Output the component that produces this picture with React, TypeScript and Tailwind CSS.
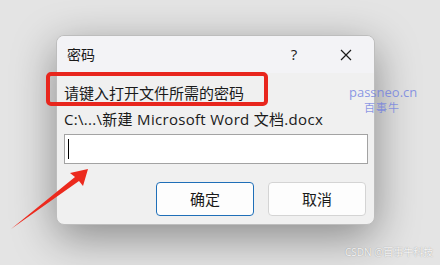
import React from 'react';

const font = { fontFamily: '"Open Sans", "Noto Sans CJK SC", sans-serif' };

export default function App() {
  return (
    <div
      className="relative w-[440px] h-[265px] overflow-hidden bg-[#e4e4e4] pt-[35px] pl-[56px]"
      style={font}
    >
      {/* dialog */}
      <div className="w-[319px] h-[190px] rounded-[8px] border border-[#bdbdbd] bg-[#f0f0f0] overflow-hidden flex flex-col shadow-[0_12px_44px_rgba(0,0,0,0.4)]">
        {/* title bar */}
        <div className="h-[37px] bg-[#f3f3f6] flex items-center pl-[10px] text-[14px] text-[#1a1a1a]">
          <span className="flex-1">密码</span>
          <span className="w-[16px] text-center mr-[38px] text-[15px]">?</span>
          <svg width="12" height="12" viewBox="0 0 12 12" className="mr-[22px]">
            <path d="M1 1 L11 11 M11 1 L1 11" stroke="#1a1a1a" strokeWidth="1.2" />
          </svg>
        </div>

        {/* body */}
        <div className="flex flex-col pl-[7px] pr-[6px] pt-[10px] text-[15px] text-[#1a1a1a]">
          <div className="leading-[21px]">请键入打开文件所需的密码</div>
          <div className="leading-[21px] mt-[5px] tracking-[0.3px]">C:\...\新建 Microsoft Word 文档.docx</div>
          <div className="mt-[4px] h-[30px] bg-white border border-[#a3a3a3] flex items-center pl-[3px]">
            <div className="w-px h-[20px] bg-black" />
          </div>
          <div className="flex justify-end gap-[14px] mt-[18px] pr-[2px]">
            <button className="w-[98px] h-[34px] rounded-[4px] border border-[#1f6fb8] bg-[#fdfdfd] text-[15px]">
              确定
            </button>
            <button className="w-[98px] h-[34px] rounded-[4px] border border-[#d4d4d4] bg-[#fdfdfd] text-[15px]">
              取消
            </button>
          </div>
        </div>
      </div>

      {/* red highlight box */}
      <div className="absolute left-[46px] top-[72px] w-[222px] h-[34px] border-[4px] border-[#e8261d] rounded-[5px]" />

      {/* red arrow */}
      <svg className="absolute left-0 top-0" width="440" height="265" viewBox="0 0 440 265">
        <polygon
          points="11,229 75,177 70,173 88,169 83,186 79,181"
          fill="#ec2a1e"
        />
      </svg>

      {/* watermarks */}
      <div className="absolute left-[349px] top-[85px] text-[13px] leading-[15px] text-[#6f7ee0]/80">
        passneo.cn
      </div>
      <div className="absolute left-[364px] top-[101px] text-[11px] leading-[13px] text-[#6f7ee0]/80 tracking-[1px]">
        百事牛
      </div>
      <div className="absolute left-[345px] top-[245px] text-[10px] leading-[14px] text-white/90 [text-shadow:0_0_1px_rgba(0,0,0,0.4)]">
        CSDN @百事牛科技
      </div>
    </div>
  );
}
